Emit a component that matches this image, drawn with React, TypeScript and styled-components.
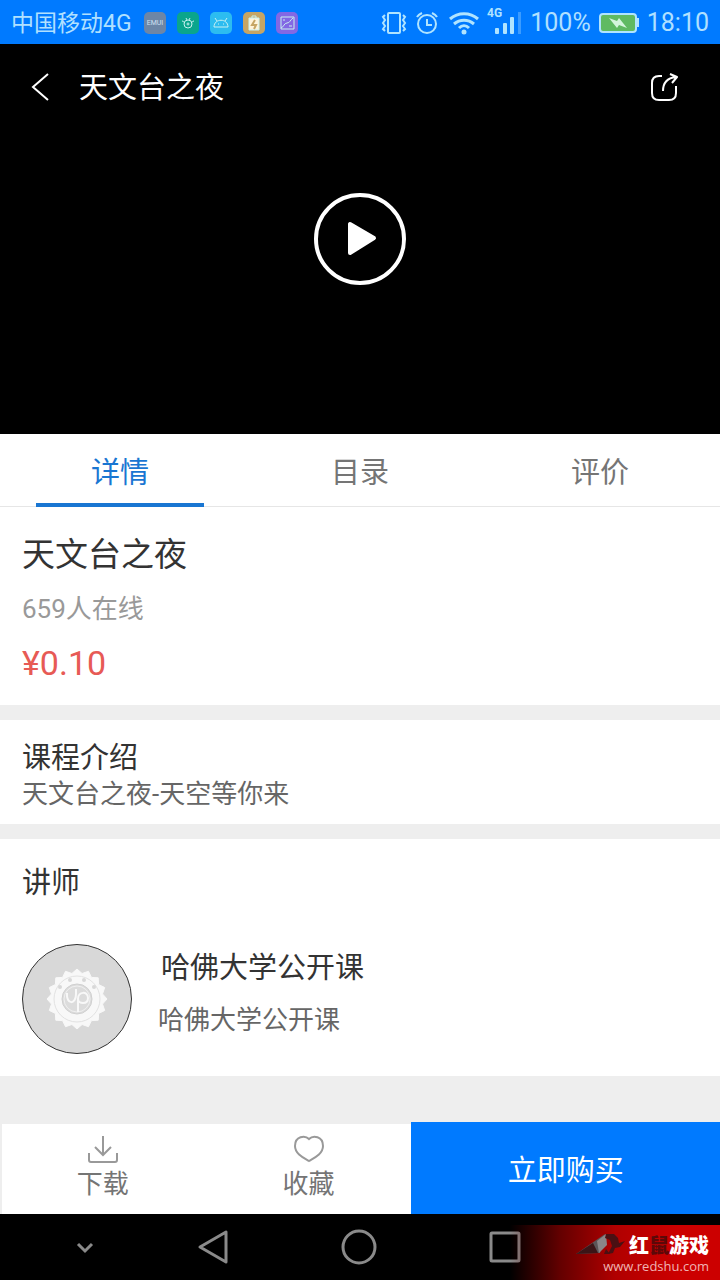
import React, { useState } from 'react';
import styled, { createGlobalStyle } from 'styled-components';

const GlobalStyle = createGlobalStyle`
  * { box-sizing: border-box; }
  body {
    margin: 0;
    background: #eeeeee;
    font-family: Roboto, "Noto Sans CJK SC", sans-serif;
    color: #333333;
  }
  h1, h2, h3, p { margin: 0; font-weight: 400; }
  button { margin: 0; padding: 0; border: 0; background: none; font: inherit; color: inherit; cursor: pointer; }
  svg { display: block; flex: none; }
`;

const Page = styled.div`
  display: flex;
  flex-direction: column;
  min-height: 100vh;
`;

const StatusBar = styled.div`
  display: flex;
  align-items: center;
  height: 44px;
  padding: 1px 11px 0 11px;
  background: #007aff;
  color: #b0e0ff;
  font-size: 25px;
  line-height: 43px;
`;

const Carrier = styled.span`
  padding-top: 2px;
  font-size: 23px;
`;

const AppIcons = styled.div`
  display: flex;
  gap: 11px;
  margin-left: 12px;
`;

const StatusRight = styled.div`
  display: flex;
  align-items: center;
  gap: 7px;
  margin-left: auto;
`;

const Video = styled.section`
  display: flex;
  flex-direction: column;
  height: 390px;
  background: #000000;
  color: #ffffff;
`;

const VideoHeader = styled.header`
  display: flex;
  align-items: center;
  height: 86px;
  padding: 0 40px 0 30px;
`;

const VideoTitle = styled.h1`
  flex: 1;
  margin-left: 29px;
  padding-top: 2px;
  font-size: 29px;
  line-height: 40px;
`;

const PlayButton = styled.button`
  align-self: center;
  margin-top: 62px;
`;

const Tabs = styled.div`
  display: flex;
  height: 73px;
  background: #ffffff;
  border-bottom: 1px solid #e6e6e6;
`;

const Tab = styled.button<{ $active: boolean }>`
  flex: 1;
  display: flex;
  flex-direction: column;
  align-items: center;
  padding-top: 17px;
  font-size: 29px;
  line-height: 44px;
  color: ${p => (p.$active ? '#1976d2' : '#757575')};
  &::after {
    content: '';
    flex: none;
    width: 70%;
    height: 4px;
    margin-top: 8px;
    background: ${p => (p.$active ? '#1976d2' : 'transparent')};
  }
`;

const Card = styled.section<{ $pad: string }>`
  margin-bottom: 15px;
  padding: ${p => p.$pad};
  background: #ffffff;
`;

const CourseName = styled.h2`
  font-size: 33px;
  line-height: 48px;
`;

const Online = styled.p`
  margin-top: 10px;
  font-size: 26px;
  line-height: 40px;
  color: #999999;
`;

const Price = styled.p`
  margin-top: 12px;
  font-size: 34px;
  line-height: 44px;
  color: #e75a55;
`;

const Heading = styled.h3`
  font-size: 29px;
  line-height: 36px;
`;

const Muted = styled.p`
  font-size: 26px;
  line-height: 36px;
  color: #666666;
`;

const Teacher = styled.div`
  display: flex;
  align-items: flex-start;
  gap: 26px;
  margin-top: 43px;
`;

const TeacherText = styled.div`
  display: flex;
  flex-direction: column;
  gap: 16px;
  padding-top: 6px;
`;

const TeacherName = styled(Heading)`
  padding-left: 3px;
`;

const BottomBars = styled.div`
  margin-top: auto;
`;

const ActionBar = styled.div`
  display: flex;
  height: 92px;
`;

const SideActions = styled.div`
  flex: 4;
  display: flex;
  background: #ffffff;
  box-shadow: inset 2px 2px 0 #eeeeee;
`;

const SideAction = styled.button`
  flex: 1;
  display: flex;
  flex-direction: column;
  align-items: center;
  padding-top: 12px;
  font-size: 26px;
  line-height: 36px;
  color: #757575;
`;

const BuyButton = styled.button`
  flex: 3;
  background: #007aff;
  color: #ffffff;
  font-size: 29px;
`;

const NavBar = styled.nav`
  position: relative;
  display: flex;
  height: 66px;
  padding: 0 142px 0 30px;
  background: #000000;
`;

const NavButton = styled.button<{ $grow: number }>`
  flex: ${p => p.$grow} 1 0;
  display: flex;
  align-items: center;
  justify-content: center;
`;

const Watermark = styled.div`
  position: absolute;
  right: 0;
  bottom: 0;
  display: flex;
  flex-direction: column;
  align-items: flex-end;
  width: 210px;
  height: 55px;
  padding: 6px 11px 0 0;
  background: linear-gradient(to right, rgba(100, 0, 0, 0), #640000 24%, #b00000 50%, #cc0000 80%);
  color: #ffffff;
`;

const WatermarkBrand = styled.div`
  display: flex;
  align-items: center;
  gap: 3px;
  font-family: "Noto Sans CJK SC", sans-serif;
  font-size: 20px;
  font-weight: 900;
  line-height: 28px;
`;

const DarkGlyph = styled.span`
  color: #5c0808;
`;

const WatermarkUrl = styled.div`
  font-family: "Open Sans", sans-serif;
  font-size: 13px;
  line-height: 14px;
  color: #f0b4b4;
`;

const appIcons = [
  {
    color: '#6d86a6',
    art: <text x="11" y="13" textAnchor="middle" fontSize="7" fill="#cfe0f2" stroke="none">EMUI</text>,
  },
  {
    color: '#0aa58c',
    art: <><path d="M5 9c2 0 2 2 3 2M17 9c-2 0-2 2-3 2M9 6l1 2M13 6l-1 2" /><circle cx="11" cy="12" r="4" /><circle cx="11" cy="12" r="1" /></>,
  },
  {
    color: '#2cbcf0',
    art: <><path d="M4 15c0-9 14-9 14 0ZM7 9 5 6M15 9l2-3" /><path d="M8 12h1M13 12h1" /></>,
  },
  {
    color: '#c6a564',
    art: <><path d="M9 6V4h4v2" /><path d="M6 6h10v12H6Z" fill="#fff3da" /><path d="m12 8-3 5h4l-2 4" stroke="#c6a564" strokeWidth="2" /></>,
  },
  {
    color: '#8368e4',
    art: <><path d="M5 5h13v12H5Z" /><path d="M5 16c3-1 3-5 6-5s3-3 6-5M7 8h2M13 14h3" /></>,
  },
];

const Logo = () => (
  <svg width="50" height="24" viewBox="0 0 50 24">
    <path d="M0 21 29 1 24 20Z" fill="#5b5557" />
    <path d="m0 21 17-11 5 10Z" fill="#3b1517" />
    <path d="m30 1-9 7 2 12 8-8Z" fill="#8a8587" />
    <path d="M30 1h8l4 4 1 5 6-2-5 6-5 1-2 5-5 1 4-8-2-6-5-2Z" fill="#4b1013" />
    <path d="m30 16 4 5h-6Z" fill="#4b1013" />
  </svg>
);

const Emblem = () => {
  const points = Array.from({ length: 32 }, (_, i) => {
    const r = i % 2 ? 26 : 30;
    const a = (i * Math.PI) / 16 - Math.PI / 2;
    return `${55 + r * Math.cos(a)},${55 + r * Math.sin(a)}`;
  }).join(' ');
  return (
    <svg width="110" height="110" viewBox="0 0 110 110" fill="none">
      <circle cx="55" cy="55" r="54.5" fill="#d8d8d8" stroke="#333333" />
      <polygon points={points} fill="#f8f8f8" stroke="#f8f8f8" strokeWidth="1" strokeLinejoin="round" />
      <circle cx="55" cy="55" r="23" stroke="#e2e2e2" />
      <circle cx="55" cy="55" r="15" fill="#dcdcdc" stroke="#d0d0d0" />
      <circle cx="55" cy="55" r="13" stroke="#f0f0f0" />
      <path d="M45 49c-1 12 9 12 9 1v-5M56 68V55c0-8 10-8 10-1s-10 6-10 1" stroke="#f8f8f8" strokeWidth="2" />
      <g fill="#d8d8d8"><circle cx="38" cy="43" r="2" /><circle cx="48" cy="36" r="2" /><circle cx="62" cy="36" r="2" /><circle cx="72" cy="43" r="2" /></g>
    </svg>
  );
};

const tabs = ['详情', '目录', '评价'];

export default function App() {
  const [active, setActive] = useState(0);
  return (
    <Page>
      <GlobalStyle />
      <StatusBar>
        <Carrier>中国移动4G</Carrier>
        <AppIcons>
          {appIcons.map(icon => (
            <svg key={icon.color} width="22" height="22" viewBox="0 0 22 22" fill="none" stroke="#c8f0f0">
              <rect width="22" height="22" rx="5" fill={icon.color} stroke="none" />
              {icon.art}
            </svg>
          ))}
        </AppIcons>
        <StatusRight>
          <svg width="26" height="24" viewBox="0 0 26 24" fill="none" stroke="#b0e4ff" strokeWidth="2">
            <rect x="7" y="2" width="12" height="20" rx="1" />
            <path d="M4 4 2 6l2 3-2 3 2 3-2 3 2 2M22 4l2 2-2 3 2 3-2 3 2 3-2 2" />
          </svg>
          <svg width="27" height="24" viewBox="0 0 27 24" fill="none" stroke="#b0e4ff" strokeWidth="2">
            <circle cx="13" cy="13" r="9" />
            <path d="M13 8v6h5M3 6c1-2 3-3 5-4M23 6c-1-2-3-3-5-4" />
          </svg>
          <svg width="32" height="24" viewBox="0 0 32 24" fill="none" stroke="#b0e4ff" strokeWidth="3">
            <path d="M2 8c8-7 20-7 28 0M6 13c6-5 14-5 20 0M11 17c3-3 7-3 10 0" />
            <circle cx="16" cy="21" r="2.5" fill="#b0e4ff" stroke="none" />
          </svg>
          <svg width="36" height="32" viewBox="0 0 36 32" fill="#b0e4ff">
            <text x="0" y="10" fontSize="12" fontWeight="700">4G</text>
            <rect x="8" y="21" width="4" height="6" rx="1" />
            <rect x="16" y="16" width="4" height="11" rx="1" />
            <rect x="23" y="10" width="4" height="17" rx="1" />
            <rect x="31" y="5" width="3" height="22" fill="#3c9cff" />
          </svg>
          <span>100%</span>
          <svg width="42" height="22" viewBox="0 0 42 22">
            <rect x="2" y="2" width="36" height="18" rx="3" fill="#5fba62" stroke="#b0e4ff" strokeWidth="2" />
            <path d="M39 6h2v9h-2Z" fill="#b0e4ff" />
            <path d="m11 6 8 3 2-3 4 5 4 5-8-3-2 3Z" fill="#d4f5dc" />
          </svg>
          <span>18:10</span>
        </StatusRight>
      </StatusBar>

      <Video>
        <VideoHeader>
          <button aria-label="返回">
            <svg width="20" height="30" viewBox="0 0 20 30" fill="none" stroke="#fff" strokeWidth="2">
              <path d="M18 2 3 15l15 13" />
            </svg>
          </button>
          <VideoTitle>天文台之夜</VideoTitle>
          <button aria-label="分享">
            <svg width="30" height="30" viewBox="0 0 30 30" fill="none" stroke="#fff" strokeWidth="2" strokeLinejoin="round">
              <path d="M12 4H9Q2 4 2 11v10q0 7 7 7h10q7 0 7-7v-7" />
              <path d="M13 19c0-8 4-13 13-14M20 2l7 3-5 6" />
            </svg>
          </button>
        </VideoHeader>
        <PlayButton aria-label="播放">
          <svg width="94" height="94" viewBox="0 0 94 94" fill="none" stroke="#fff">
            <circle cx="47" cy="47" r="44" strokeWidth="4" />
            <path d="M37 32v29l24-15Z" fill="#fff" strokeWidth="4" strokeLinejoin="round" />
          </svg>
        </PlayButton>
      </Video>

      <Tabs role="tablist">
        {tabs.map((tab, i) => (
          <Tab key={tab} role="tab" aria-selected={i === active} $active={i === active} onClick={() => setActive(i)}>
            {tab}
          </Tab>
        ))}
      </Tabs>

      <Card $pad="24px 22px 20px">
        <CourseName>天文台之夜</CourseName>
        <Online>659人在线</Online>
        <Price>¥0.10</Price>
      </Card>

      <Card $pad="20px 22px 12px">
        <Heading>课程介绍</Heading>
        <Muted>天文台之夜-天空等你来</Muted>
      </Card>

      <Card $pad="26px 22px 22px">
        <Heading>讲师</Heading>
        <Teacher>
          <Emblem />
          <TeacherText>
            <TeacherName>哈佛大学公开课</TeacherName>
            <Muted>哈佛大学公开课</Muted>
          </TeacherText>
        </Teacher>
      </Card>

      <BottomBars>
        <ActionBar>
          <SideActions>
            <SideAction>
              <svg width="32" height="32" viewBox="0 0 32 32" fill="none" stroke="#999" strokeWidth="2">
                <path d="M16 2v19M8 13l8 8 8-8M2 19v7q0 2 2 2h24q2 0 2-2v-7" />
              </svg>
              下载
            </SideAction>
            <SideAction>
              <svg width="32" height="32" viewBox="0 0 32 32" fill="none" stroke="#999" strokeWidth="2">
                <path d="M16 5C12 1 2 2 2 12c0 8 9 12 14 15 5-3 14-7 14-15C30 2 20 1 16 5Z" />
              </svg>
              收藏
            </SideAction>
          </SideActions>
          <BuyButton>立即购买</BuyButton>
        </ActionBar>
        <NavBar>
          <NavButton $grow={110} aria-label="收起">
            <svg width="20" height="20" viewBox="0 0 20 20" fill="none" stroke="#8a8a8a" strokeWidth="3">
              <path d="m3 7 7 7 7-7" />
            </svg>
          </NavButton>
          <NavButton $grow={146} aria-label="后退">
            <svg width="34" height="36" viewBox="0 0 34 36" fill="none" stroke="#8a8a8a" strokeWidth="3" strokeLinejoin="round">
              <path d="M30 3v30L4 18Z" />
            </svg>
          </NavButton>
          <NavButton $grow={146} aria-label="主页">
            <svg width="36" height="36" viewBox="0 0 36 36" fill="none" stroke="#8a8a8a" strokeWidth="3">
              <circle cx="18" cy="18" r="16" />
            </svg>
          </NavButton>
          <NavButton $grow={146} aria-label="最近任务">
            <svg width="34" height="34" viewBox="0 0 34 34" fill="none" stroke="#8a8a8a" strokeWidth="3">
              <rect x="3" y="3" width="28" height="28" rx="1" />
            </svg>
          </NavButton>
          <Watermark>
            <WatermarkBrand>
              <Logo />
              <span>红<DarkGlyph>鼠</DarkGlyph>游戏</span>
            </WatermarkBrand>
            <WatermarkUrl>www.redshu.com</WatermarkUrl>
          </Watermark>
        </NavBar>
      </BottomBars>
    </Page>
  );
}
